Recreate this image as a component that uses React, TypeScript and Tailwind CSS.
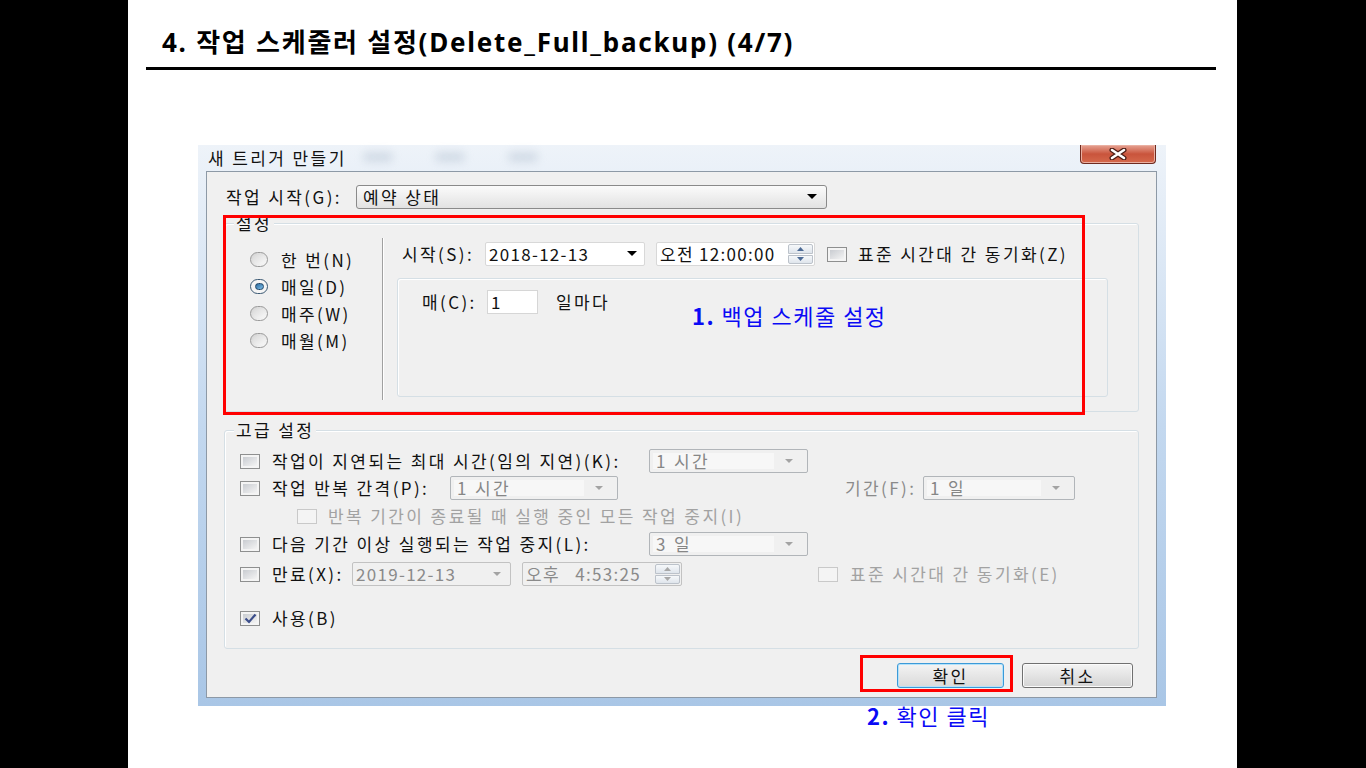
import React from 'react';

const txt = 'text-[17px] tracking-[2.4px] leading-[20px]';
const num = 'text-[17px] tracking-[1.3px] leading-[20px] whitespace-pre';

function Arrow({ disabled }: { disabled?: boolean }) {
  return disabled ? (
    <svg width="10" height="5" viewBox="0 0 10 5">
      <path d="M1 0h8L5 4z" fill="#a3a3a3" />
    </svg>
  ) : (
    <svg width="10" height="6" viewBox="0 0 10 6">
      <path d="M0 0h10L5 5z" fill="#000" />
    </svg>
  );
}

function Check({ checked, disabled }: { checked?: boolean; disabled?: boolean }) {
  return (
    <span
      className={`relative flex h-[15px] w-[20px] shrink-0 items-center justify-center border ${
        disabled ? 'border-[#c9c9c9] bg-[#f4f4f4]' : 'border-[#8e8f8f] bg-[#f4f4f4]'
      }`}
    >
      <span
        className={`h-[9px] w-[14px] ${
          disabled ? 'bg-[#f4f4f4]' : 'bg-gradient-to-br from-[#c9ccd1] to-[#f4f4f4]'
        }`}
      />
      {checked && (
        <svg className="absolute left-[3px] top-[1px]" width="13" height="11" viewBox="0 0 13 11">
          <path d="M1.5 5.5L5 9L11.5 1.5" fill="none" stroke="#3b4d8a" strokeWidth="2.2" />
        </svg>
      )}
    </span>
  );
}

function Radio({ on }: { on?: boolean }) {
  return (
    <span
      className={`flex h-[15px] w-[18px] shrink-0 items-center justify-center rounded-full border ${
        on ? 'border-[#3d5a74] bg-[#f5f5f5]' : 'border-[#9a9a9a] bg-gradient-to-br from-[#d2d2d2] to-[#fbfbfb]'
      }`}
    >
      {on ? (
        <span className="h-[7px] w-[9px] rounded-full border border-[#1d4466] bg-gradient-to-br from-[#2d6a9c] to-[#7dc0ec]" />
      ) : (
        <span className="h-[9px] w-[12px] rounded-full bg-gradient-to-br from-[#dadada] to-[#f8f8f8]" />
      )}
    </span>
  );
}

function Spin({ disabled }: { disabled?: boolean }) {
  const fill = disabled ? '#a8a8a8' : '#4c6a95';
  return (
    <div className="flex h-[20px] w-[25px] shrink-0 flex-col gap-px">
      <div className="flex flex-1 items-center justify-center rounded-t-[2px] border border-[#bcc2ca] bg-gradient-to-b from-[#f6f8fa] to-[#dfe5ec]">
        <svg width="7" height="4" viewBox="0 0 7 4">
          <path d="M0 4L3.5 0L7 4z" fill={fill} />
        </svg>
      </div>
      <div className="flex flex-1 items-center justify-center rounded-b-[2px] border border-[#bcc2ca] bg-gradient-to-b from-[#f6f8fa] to-[#dfe5ec]">
        <svg width="7" height="4" viewBox="0 0 7 4">
          <path d="M0 0L3.5 4L7 0z" fill={fill} />
        </svg>
      </div>
    </div>
  );
}

function DisCombo({ className, text }: { className: string; text: string }) {
  return (
    <div className={`flex h-[24px] shrink-0 items-center rounded-[2px] border border-[#b1b5b9] bg-[#f0f0f0] p-[3px] ${className}`}>
      <span className={`flex h-full flex-1 items-center bg-[#f7f7f7] pl-[3px] text-[#868686] ${txt}`}>{text}</span>
      <span className="flex w-[30px] items-center justify-center">
        <Arrow disabled />
      </span>
    </div>
  );
}

function GroupBox({ label, className, children }: { label: string; className: string; children: React.ReactNode }) {
  return (
    <div className={`relative ml-[17px] w-[915px] rounded-[3px] border border-[#d5dfe5] shadow-[inset_1px_1px_0_#ffffff] ${className}`}>
      <span className={`absolute -top-[11px] left-[9px] bg-[#f0f0f0] px-[2px] ${txt}`}>{label}</span>
      {children}
    </div>
  );
}

export default function App() {
  return (
    <div className="flex h-[768px] w-[1366px] overflow-hidden bg-black font-['Noto_Sans_CJK_KR',sans-serif] text-[#111]">
      <div className="w-[128px] shrink-0 bg-black" />

      <div className="w-[1109px] shrink-0 bg-white pt-[27px]">
        <h1 className="ml-[34px] whitespace-nowrap font-['Noto_Sans','Noto_Sans_CJK_KR',sans-serif] text-[26px] font-bold leading-[31px] tracking-[1.75px] text-black">
          4. 작업 스케줄러 설정(Delete_Full_backup) (4/7)
        </h1>
        <div className="ml-[18px] mt-[9px] h-[3px] w-[1070px] bg-black" />

        {/* dialog */}
        <div className="relative ml-[70px] mt-[75px] h-[561px] w-[968px] bg-gradient-to-b from-[#eef3f9] via-[#c3d8ef] to-[#a9c6e6]">
          <div className={`relative flex h-[26px] items-center pl-[10px] ${txt}`}>
            새 트리거 만들기
            <span className="absolute left-[165px] top-[7px] h-[10px] w-[30px] rounded-full bg-[#a9b9cb]/40 blur-[4px]" />
            <span className="absolute left-[237px] top-[7px] h-[10px] w-[30px] rounded-full bg-[#a9b9cb]/40 blur-[4px]" />
            <span className="absolute left-[310px] top-[7px] h-[10px] w-[30px] rounded-full bg-[#a9b9cb]/40 blur-[4px]" />
          </div>
          <div className="absolute left-[882px] top-0 flex h-[19px] w-[76px] items-center justify-center rounded-b-[4px] border border-t-0 border-[#6e2a1f] bg-gradient-to-b from-[#e6a394] via-[#c9543c] to-[#d5694c] shadow-[inset_0_0_0_1px_#eab0a2]">
            <svg width="22" height="12" viewBox="0 0 22 12">
              <path d="M5 2L17 10M17 2L5 10" stroke="#4a1c14" strokeWidth="5" strokeLinecap="round" />
              <path d="M5 2L17 10M17 2L5 10" stroke="#ffffff" strokeWidth="2.6" strokeLinecap="round" />
            </svg>
          </div>

          {/* client area */}
          <div className="relative ml-[8px] h-[527px] w-[951px] border border-[#8d99a6] bg-[#f0f0f0]">
            <div className="mt-[13px] flex h-[24px] items-center">
              <span className={`ml-[19px] w-[130px] ${txt}`}>작업 시작(G):</span>
              <div className="flex h-[24px] w-[471px] items-center justify-between rounded-[3px] border border-[#8a8a8a] bg-gradient-to-b from-[#fbfbfb] to-[#e2e2e2] pl-[6px] pr-[9px]">
                <span className={txt}>예약 상태</span>
                <Arrow />
              </div>
            </div>

            <GroupBox label="설정" className="mt-[14px] h-[189px]">
              <div className="flex">
                <div className="flex w-[157px] flex-col pl-[25px] pt-[22px]">
                  {[
                    ['한 번(N)', false],
                    ['매일(D)', true],
                    ['매주(W)', false],
                    ['매월(M)', false],
                  ].map(([l, on]) => (
                    <div key={l as string} className="flex h-[27px] items-center gap-[13px]">
                      <Radio on={on as boolean} />
                      <span className={txt}>{l as string}</span>
                    </div>
                  ))}
                </div>
                <div className="mt-[14px] h-[162px] w-[2px] border-l border-r border-l-[#a0a0a0] border-r-white" />
                <div className="flex flex-col pl-[13px]">
                  <div className="mt-[18px] flex h-[24px] items-center">
                    <span className={`ml-[5px] w-[83px] ${txt}`}>시작(S):</span>
                    <div className="flex h-[24px] w-[160px] items-center justify-between rounded-[2px] border border-[#d8d8d8] bg-white pl-[3px] pr-[7px]">
                      <span className={num}>2018-12-13</span>
                      <Arrow />
                    </div>
                    <div className="ml-[11px] flex h-[24px] w-[159px] items-center justify-between rounded-[2px] border border-[#d8d8d8] bg-white pl-[3px] pr-[1px]">
                      <span className={num}>오전 12:00:00</span>
                      <Spin />
                    </div>
                    <span className="ml-[12px]">
                      <Check />
                    </span>
                    <span className={`ml-[11px] whitespace-nowrap ${txt}`}>표준 시간대 간 동기화(Z)</span>
                  </div>
                  <div className="mt-[12px] h-[119px] w-[711px] rounded-[3px] border border-[#d5dfe5] shadow-[inset_1px_1px_0_#ffffff]">
                    <div className="mt-[11px] flex h-[24px] items-center">
                      <span className={`ml-[24px] w-[65px] ${txt}`}>매(C):</span>
                      <div className={`flex h-[24px] w-[51px] items-start border border-[#d6d6d6] bg-white pl-[3px] pt-[1px] ${txt}`}>1</div>
                      <span className={`ml-[18px] ${txt}`}>일마다</span>
                    </div>
                  </div>
                </div>
              </div>
            </GroupBox>

            <GroupBox label="고급 설정" className="mt-[18px] h-[219px]">
              <div className="flex flex-col">
                <div className="mt-[18px] flex h-[24px] items-center pl-[15px]">
                  <Check />
                  <span className={`ml-[12px] w-[377px] whitespace-nowrap ${txt}`}>작업이 지연되는 최대 시간(임의 지연)(K):</span>
                  <DisCombo className="w-[159px]" text="1 시간" />
                </div>
                <div className="mt-[3px] flex h-[24px] items-center pl-[15px]">
                  <Check />
                  <span className={`ml-[12px] w-[178px] whitespace-nowrap ${txt}`}>작업 반복 간격(P):</span>
                  <DisCombo className="w-[168px]" text="1 시간" />
                  <span className={`ml-[227px] w-[78px] text-[#8a8a8a] ${txt}`}>기간(F):</span>
                  <DisCombo className="w-[152px]" text="1 일" />
                </div>
                <div className="mt-[4px] flex h-[24px] items-center pl-[72px]">
                  <Check disabled />
                  <span className={`ml-[11px] whitespace-nowrap text-[#a2a2a2] ${txt}`}>반복 기간이 종료될 때 실행 중인 모든 작업 중지(I)</span>
                </div>
                <div className="mt-[4px] flex h-[24px] items-center pl-[15px]">
                  <Check />
                  <span className={`ml-[12px] w-[377px] whitespace-nowrap ${txt}`}>다음 기간 이상 실행되는 작업 중지(L):</span>
                  <DisCombo className="w-[159px]" text="3 일" />
                </div>
                <div className="mt-[6px] flex h-[24px] items-center pl-[15px]">
                  <Check />
                  <span className={`ml-[12px] w-[80px] whitespace-nowrap ${txt}`}>만료(X):</span>
                  <div className="flex h-[24px] w-[159px] items-center justify-between rounded-[2px] border border-[#c2c2c2] bg-[#f0f0f0] pl-[3px] pr-[8px]">
                    <span className={`text-[#8a8a8a] ${num}`}>2019-12-13</span>
                    <Arrow disabled />
                  </div>
                  <div className="ml-[11px] flex h-[24px] w-[160px] items-center justify-between rounded-[2px] border border-[#c2c2c2] bg-[#f0f0f0] pl-[3px] pr-[1px]">
                    <span className={`text-[#8a8a8a] ${num}`}>오후   4:53:25</span>
                    <Spin disabled />
                  </div>
                  <span className="ml-[136px]">
                    <Check disabled />
                  </span>
                  <span className={`ml-[12px] whitespace-nowrap text-[#a2a2a2] ${txt}`}>표준 시간대 간 동기화(E)</span>
                </div>
                <div className="mt-[20px] flex h-[24px] items-center pl-[15px]">
                  <Check checked />
                  <span className={`ml-[12px] ${txt}`}>사용(B)</span>
                </div>
              </div>
            </GroupBox>

            <div className="mt-[14px] flex justify-end gap-[18px] pr-[23px]">
              <button className={`h-[25px] w-[107px] rounded-[3px] border border-[#3c9ad8] bg-gradient-to-b from-[#f4f4f4] to-[#d9d9d9] shadow-[inset_0_0_0_1px_#b4e2fa] ${txt}`}>
                확인
              </button>
              <button className={`h-[25px] w-[111px] rounded-[3px] border border-[#707070] bg-gradient-to-b from-[#f4f4f4] to-[#d4d4d4] shadow-[inset_0_0_0_1px_#fbfbfb] ${txt}`}>
                취소
              </button>
            </div>

            {/* annotations over the dialog */}
            <div className="pointer-events-none absolute left-[16px] top-[43px] h-[200px] w-[862px] border-[3px] border-[#ff0000]" />
            <div className="pointer-events-none absolute left-[653px] top-[483px] h-[37px] w-[153px] border-[3px] border-[#ff0000]" />
            <div className="absolute left-[485px] top-[131px] whitespace-nowrap text-[22px] leading-[24px] tracking-[1.5px] text-[#0a0af5]">
              <span className="font-bold">1.</span> 백업 스케줄 설정
            </div>
          </div>
        </div>

        <div className="-mt-[3px] ml-[739px] text-[22px] leading-[24px] tracking-[1.5px] text-[#0a0af5]">
          <span className="font-bold">2.</span> 확인 클릭
        </div>
      </div>

      <div className="flex-1 bg-black" />
    </div>
  );
}
